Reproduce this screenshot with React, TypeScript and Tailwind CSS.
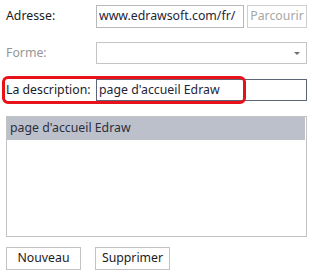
import React from "react";

export default function App() {
  return (
    <div className="relative w-[312px] h-[277px] bg-white text-[12.3px] leading-none text-[#1b1b1b] font-['Noto_Sans','Noto_Sans_CJK_SC',sans-serif]">
      <div className="flex flex-col pl-[6px] pr-[5px] pt-[5px]">
        <div className="flex h-[23px] items-stretch">
          <div className="flex w-[90px] items-center">Adresse:</div>
          <div className="flex w-[148px] items-center border border-[#b8b8b8] pl-[2px] text-[#1e2538]">
            www.edrawsoft.com/fr/
          </div>
          <div className="ml-[3px] flex w-[60px] items-center justify-center border border-[#cfcfcf] text-[#a6a6a6]">
            Parcourir
          </div>
        </div>
        <div className="mt-[14px] flex h-[22px] items-stretch">
          <div className="flex w-[90px] items-center text-[#969696]">Forme:</div>
          <div className="flex flex-1 items-center justify-end border border-[#c4c4c4] pr-[6px]">
            <svg width="6" height="3" viewBox="0 0 6 3">
              <path d="M0 0 H6 L3 3 Z" fill="#707070" />
            </svg>
          </div>
        </div>
        <div className="mt-[15px] flex h-[22px] items-stretch">
          <div className="flex w-[90px] items-center">La description:</div>
          <div className="flex flex-1 items-center border border-[#5d6577] pl-[2px] text-[#1e2538]">
            page d'accueil Edraw
          </div>
        </div>
        <div className="mt-[15px] h-[121px] border border-[#c3c3c3] pr-[1px]">
          <div className="flex h-[23px] items-center bg-[#bcc0ca] pl-[3px] text-[#2a2f3c]">
            page d'accueil Edraw
          </div>
        </div>
        <div className="mt-[10px] flex h-[23px] gap-[14px]">
          <div className="flex w-[75px] items-center justify-center border border-[#c3c3c3]">Nouveau</div>
          <div className="flex w-[75px] items-center justify-center border border-[#c3c3c3]">Supprimer</div>
        </div>
      </div>
      <div className="absolute left-[2px] top-[76px] h-[28px] w-[244px] rounded-[6px] border-[3px] border-[#e8121a]" />
    </div>
  );
}
